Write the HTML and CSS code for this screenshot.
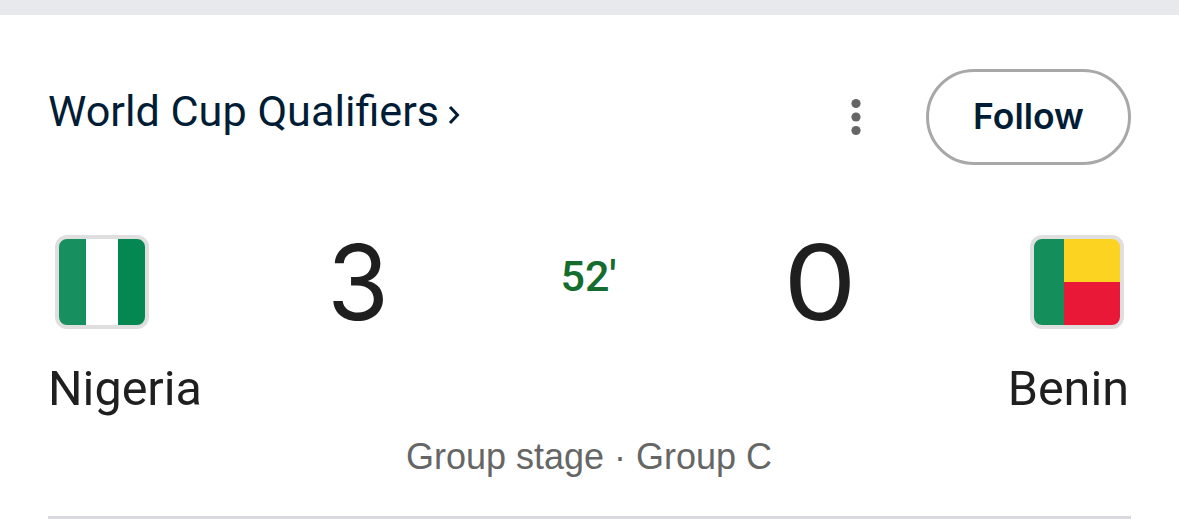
FILE: index.html
```html
<!DOCTYPE html>
<html lang="en">
<head>
  <title>Nigeria vs Benin | World Cup Qualifiers</title>
  <meta charset="UTF-8">
  <meta name="viewport" content="width=device-width, initial-scale=1.0">
  <link rel="stylesheet" href="styles.css">
</head>
<body>
  <main class="match-card">
    <header class="match-header">
      <a class="league" href="#">
        <span class="league-name">World Cup Qualifiers</span>
        <svg class="chevron" width="12" height="20" viewBox="0 0 12 20">
          <path d="M2 2L9.500 10L2 18" fill="none" stroke="#001d35" stroke-width="3"/>
        </svg>
      </a>
      <div class="actions">
        <svg class="more" width="10" height="38" viewBox="0 0 10 38" fill="#666">
          <circle cx="5" cy="5.500" r="4.600"/>
          <circle cx="5" cy="19" r="4.600"/>
          <circle cx="5" cy="32.500" r="4.600"/>
        </svg>
        <button class="follow">Follow</button>
      </div>
    </header>

    <section class="scoreboard">
      <div class="flag nigeria"></div>
      <div class="score home">3</div>
      <div class="minute">52'</div>
      <div class="score away">0</div>
      <div class="flag benin"></div>
    </section>

    <div class="teams">
      <span class="team-home">Nigeria</span>
      <span class="team-away">Benin</span>
    </div>

    <p class="stage">Group stage · Group C</p>
  </main>
</body>
</html>
```
FILE: styles.css
```css
* {
  box-sizing: border-box;
}

body {
  margin: 0;
  height: 519px;
  overflow: hidden;
  font-family: Roboto, sans-serif;
  background: #fff;
  color: #1f1f1f;
  border-top: 15px solid #e8e9ed;
}

.match-card {
  margin: 0 48px;
  height: 504px;
  padding-top: 54px;
  border-bottom: 3px solid #d9d9df;
}

.match-header {
  display: flex;
  justify-content: space-between;
  height: 96px;
}

.league {
  display: flex;
  height: 86px;
  align-items: center;
  color: #001d35;
  text-decoration: none;
}

.league-name {
  font-size: 43.2px;
  line-height: 50px;
}

.chevron {
  margin: 5px 0 0 9px;
}

.actions {
  display: flex;
  align-items: center;
  gap: 65px;
}

.follow {
  width: 205px;
  height: 96px;
  padding: 0 0 2px;
  border: 3px solid #a8a8a8;
  border-radius: 48px;
  background: #fff;
  color: #001d35;
  font-family: Inter, sans-serif;
  font-size: 35.5px;
  font-weight: 560;
}

.scoreboard {
  display: grid;
  grid-template-columns: 101px 418px 45px 418px 101px;
  align-items: center;
  height: 94px;
  margin-top: 70px;
}

.flag {
  width: 94px;
  height: 94px;
  border: 4px solid #dfdfdf;
  border-radius: 12px;
  justify-self: end;
}

.nigeria {
  background: linear-gradient(90deg, #178f5e 27px, #fff 27px, #fff 59px, #058752 59px);
  background-origin: padding-box;
}

.benin {
  justify-self: start;
  background:
    linear-gradient(#148e5b, #148e5b) 0 0 / 30px 100% no-repeat,
    linear-gradient(#fcd320 50%, #e91836 50%);
}

.score {
  font-family: Inter, sans-serif;
  font-size: 104px;
  line-height: 94px;
  text-align: center;
}

.home {
  transform: scaleX(0.96);
}

.away {
  padding-right: 2px;
  transform: scaleX(1.12);
}

.minute {
  color: #146c2e;
  font-size: 43px;
  font-weight: 500;
  display: flex;
  justify-content: center;
  padding: 0 2px 12px 0;
}

.teams {
  display: flex;
  justify-content: space-between;
  margin-top: 32px;
  padding-right: 2px;
  font-size: 48.5px;
  line-height: 56px;
}

.stage {
  margin: 19px 1px 0 0;
  color: #666;
  font-family: "Liberation Sans", Arial, sans-serif;
  font-size: 36px;
  line-height: 42px;
  text-align: center;
}
```
